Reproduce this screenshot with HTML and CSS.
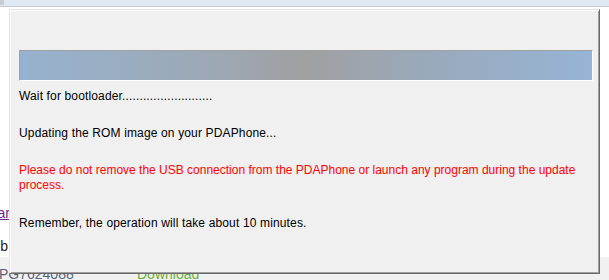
FILE: index.html
```html
<!DOCTYPE html>
<html>
<head>
<meta charset="utf-8">
<link rel="stylesheet" href="styles.css">
</head>
<body>
  <div class="tabbar"><span class="tabcorner"></span></div>
  <div class="page">
    <div class="frag"><a class="link" href="#">Similar</a></div>
    <div class="frag frag-b"><span>Lib</span></div>
    <div class="row">
      <span class="code">PG7624088</span>
      <span class="dl">Download</span>
    </div>
  </div>

  <div class="dialog">
    <div class="bar"></div>
    <p class="msg">Wait for bootloader..........................</p>
    <p class="msg">Updating the ROM image on your PDAPhone...</p>
    <p class="msg warn">Please do not remove the USB connection from the PDAPhone or launch any program during the update process.</p>
    <p class="msg">Remember, the operation will take about 10 minutes.</p>
  </div>
</body>
</html>
```

FILE: styles.css
```css
html, body {
  margin: 0;
  padding: 0;
  background: #ffffff;
  width: 609px;
  height: 280px;
  overflow: hidden;
}

body {
  position: relative;
  font-family: "Liberation Sans", Arial, sans-serif;
}

.tabbar {
  height: 6px;
  background: #dfe8f1;
  border-bottom: 1px solid #c3ccd6;
  display: flex;
}

.tabcorner {
  width: 4px;
  height: 5px;
  background: #c9cdd2;
}

.page {
  padding-top: 198px;
  font-size: 14px;
  line-height: 16px;
}

.frag {
  width: 10px;
  display: flex;
  justify-content: flex-end;
  white-space: nowrap;
}

.link {
  color: #6a2a8a;
  text-decoration: underline;
}

.frag-b {
  margin-top: 17px;
  width: 8px;
  color: #222222;
}

.row {
  margin-top: 3px;
  height: 24px;
  background: #f1f1f1;
  display: flex;
  align-items: flex-end;
  white-space: nowrap;
}

.code {
  color: #56627a;
  width: 138px;
  margin-left: -1px;
  line-height: 16px;
  position: relative;
  top: 1px;
}

.dl {
  color: #6cb23a;
  line-height: 16px;
  position: relative;
  top: 1px;
}

.dialog {
  position: absolute;
  left: 9px;
  top: 9px;
  width: 574px;
  height: 223px;
  padding: 40px 6px 0 9px;
  background: #f0f0f0;
  border-style: solid;
  border-width: 1px;
  border-color: #e3e3e3 #696969 #696969 #e3e3e3;
  box-shadow: inset 1px 1px 0 #ffffff, inset -1px -1px 0 #a0a0a0;
  font-size: 12px;
  line-height: 15px;
  color: #000000;
}

.bar {
  height: 29px;
  border-style: solid;
  border-width: 1px;
  border-color: #a0a0a0 #ffffff #ffffff #a0a0a0;
  background: linear-gradient(to right, #97b2cf 0%, #9da8b3 35%, #a0a0a0 50%, #9aa9ba 70%, #96b4d5 100%);
}

.msg {
  margin: 8px 0 22px 0;
  letter-spacing: 0.012em;
}

.msg + .msg {
  margin-top: 0;
}

.warn {
  color: #ff0000;
  letter-spacing: 0;
  margin-bottom: 23px;
}
```
